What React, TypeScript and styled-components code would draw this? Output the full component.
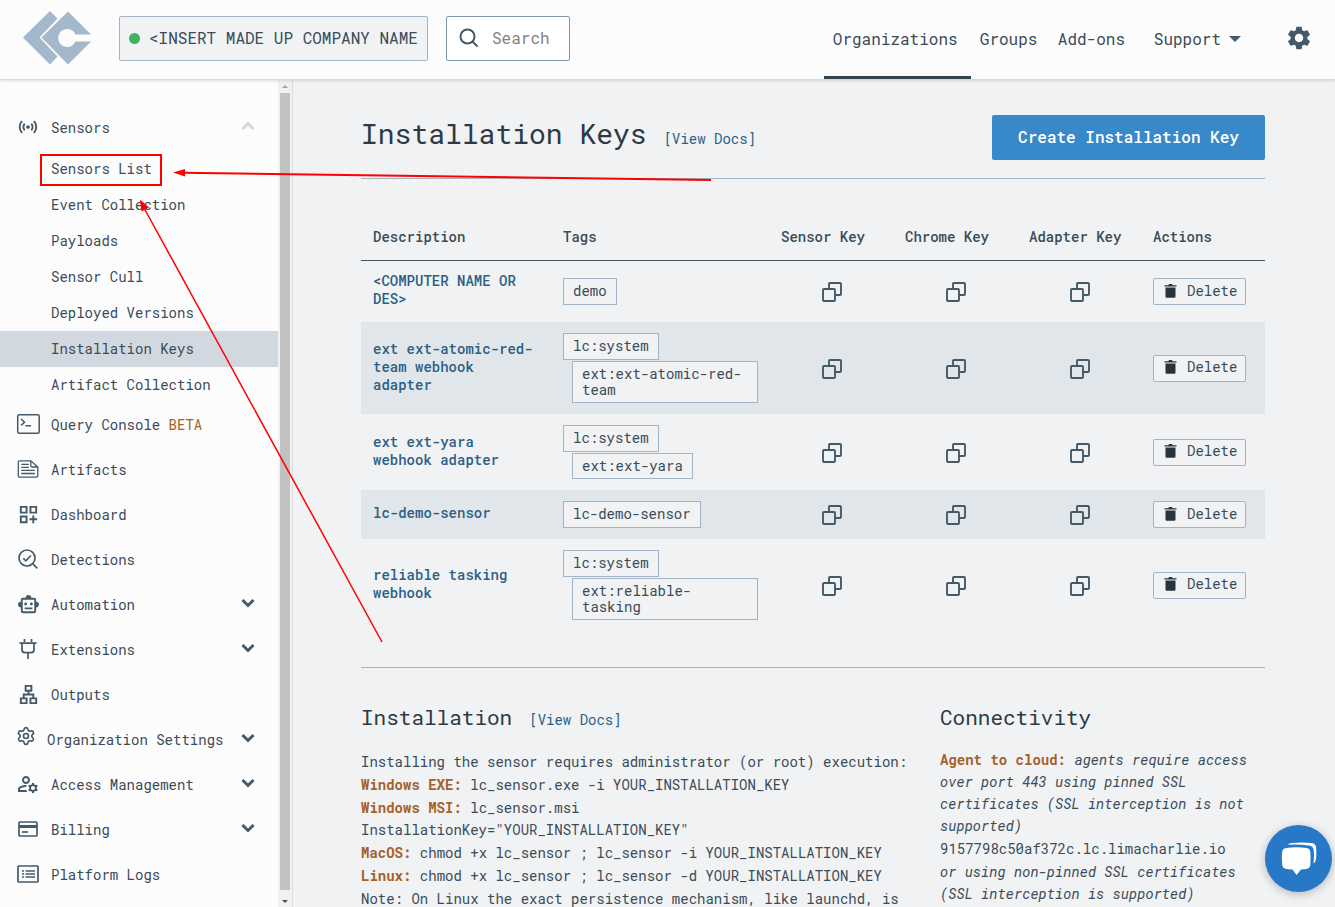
import React from "react";
import styled, { createGlobalStyle } from "styled-components";
import { Settings } from "lucide-react";
import {
  MdSensors,
  MdOutlineDashboardCustomize,
  MdOutlineSmartToy,
  MdOutlineLan,
  MdOutlineManageAccounts,
  MdSettings,
} from "react-icons/md";

const ink = "#3b4b58";
const slate = "#455a68";
const line = "#a3b5c5";
const paper = "#f0f2f4";
const rust = "#a5612a";
const link = "#2b5f86";
const mono = `"Roboto Mono", "DejaVu Sans Mono", "Liberation Mono", monospace`;

const GlobalStyle = createGlobalStyle`
  *, *::before, *::after { box-sizing: border-box; }
  body { margin: 0; background: ${paper}; color: ${ink}; font: 14px/18px ${mono}; }
  button, input { font: inherit; color: inherit; }
  h1, h2, p, ul { margin: 0; padding: 0; font-weight: 400; }
  ul { list-style: none; }
  a { color: inherit; text-decoration: none; }
`;

const Shell = styled.div`
  position: relative;
  display: flex;
  flex-direction: column;
  height: 100vh;
  overflow: hidden;
`;

const Header = styled.header`
  display: flex;
  align-items: center;
  flex: none;
  height: 80px;
  padding: 0 22px 3px 23px;
  background: #fcfcfc;
  border-bottom: 1px solid #d5d7d9;
  box-shadow: 0 1px 3px rgba(0, 0, 0, 0.12);
  z-index: 1;
`;

const Logo = styled.a`
  display: flex;
  margin-right: 28px;
`;

const OrgButton = styled.button`
  display: flex;
  align-items: center;
  gap: 9px;
  width: 309px;
  height: 45px;
  padding: 0 0 0 9px;
  overflow: hidden;
  background: ${paper};
  border: 1px solid ${line};
  border-radius: 2px;
  font-size: 16px;
  white-space: nowrap;
`;

const StatusDot = styled.span`
  flex: none;
  width: 11px;
  height: 11px;
  border-radius: 50%;
  background: #3db55f;
`;

const SearchBox = styled.label`
  display: flex;
  align-items: center;
  gap: 13px;
  width: 124px;
  height: 45px;
  margin-left: 18px;
  padding: 0 10px 0 12px;
  background: #fff;
  border: 1px solid #8097ab;
  border-radius: 2px;
`;

const SearchInput = styled.input`
  flex: 1;
  min-width: 0;
  padding: 0;
  border: 0;
  outline: 0;
  background: none;
  font-size: 16px;
  &::placeholder { color: #838383; opacity: 1; }
`;

const Nav = styled.nav`
  display: grid;
  grid-template-columns: 147px 78px 96px auto;
  align-self: stretch;
  margin: 0 44px -3px auto;
  font-size: 16px;
`;

const NavLink = styled.a<{ $active?: boolean }>`
  display: flex;
  align-items: center;
  padding: 2px 9px 0;
  border-bottom: 3px solid ${(p) => (p.$active ? "#34444f" : "transparent")};
`;

const SupportButton = styled.button`
  display: flex;
  align-items: center;
  gap: 8px;
  padding: 0 0 1px;
  margin-left: 9px;
  background: none;
  border: 0;
`;

const IconButton = styled.button`
  display: inline-flex;
  padding: 0;
  background: none;
  border: 0;
  color: ${slate};
  vertical-align: middle;
`;

const Body = styled.div`
  display: flex;
  flex: 1;
  min-height: 0;
`;

const Sidebar = styled.nav`
  flex: none;
  width: 278px;
  padding-top: 26px;
  background: #fcfcfc;
  overflow: hidden;
`;

const SideLink = styled.a`
  display: flex;
  align-items: center;
  height: 45px;
  padding: 0 23px 2px 16px;
  color: ${ink};
`;

const SideIcon = styled.span<{ $narrow?: boolean }>`
  display: flex;
  justify-content: center;
  flex: none;
  width: ${(p) => (p.$narrow ? 20 : 24)}px;
  margin-right: 11px;
  padding-bottom: ${(p) => (p.$narrow ? 7 : 1)}px;
  color: ${slate};
`;

const Chevron = styled.span<{ $faded?: boolean }>`
  display: flex;
  margin-left: auto;
  padding-bottom: 3px;
  color: ${(p) => (p.$faded ? "#d0d7de" : slate)};
`;

const SubLink = styled.a<{ $active?: boolean }>`
  display: flex;
  align-items: center;
  height: 36px;
  padding-left: 51px;
  background: ${(p) => (p.$active ? "#d1d8df" : "transparent")};
`;

const Beta = styled.span`
  margin-left: 1ch;
  color: ${rust};
`;

const ScrollTrack = styled.div`
  display: flex;
  flex-direction: column;
  flex: none;
  width: 15px;
  padding: 4px 3px 3px 2px;
  background: #f1f1f1;
  border-right: 1px solid #dcdee0;
  align-items: center;
  gap: 4px;
`;

const ScrollThumb = styled.div`
  flex: 1;
  width: 10px;
  background: #c1c1c1;
`;

const ScrollArrow = styled.span<{ $down?: boolean }>`
  width: 0;
  height: 0;
  margin: ${(p) => (p.$down ? "6px 0 1px" : "1px 0")};
  border-left: 3px solid transparent;
  border-right: 3px solid transparent;
  ${(p) => (p.$down ? "border-top: 3px solid #505050" : "border-bottom: 3px solid #a3a3a3")};
`;

const Main = styled.main`
  flex: 1;
  min-width: 0;
  padding: 35px 70px 0 68px;
  overflow: hidden;
`;

const TitleBar = styled.div`
  display: flex;
  justify-content: space-between;
  padding-bottom: 18px;
  border-bottom: 1px solid ${line};
`;

const TitleGroup = styled.div`
  display: flex;
  align-items: baseline;
  gap: 17px;
`;

const PageTitle = styled.h1`
  color: #2d3a43;
  font-size: 28px;
  line-height: 38px;
`;

const SectionTitle = styled.h2`
  color: #2d3a43;
  font-size: 21px;
  line-height: 28px;
`;

const DocsLink = styled.a`
  color: ${link};
`;

const PrimaryButton = styled.button`
  width: 273px;
  height: 45px;
  padding: 0 0 2px;
  background: #3889c9;
  border: 0;
  border-radius: 2px;
  color: #fff;
  font-size: 16px;
  font-weight: 500;
`;

const Table = styled.table`
  width: 100%;
  margin: 49px 0 36px;
  table-layout: fixed;
  border-collapse: separate;
  border-spacing: 0;
`;

const HeadCell = styled.th<{ $width?: number }>`
  width: ${(p) => (p.$width ? `${p.$width}px` : "auto")};
  padding: 0 0 14px 12px;
  border-bottom: 1px solid ${slate};
  font-weight: 500;
  text-align: left;
`;

const Row = styled.tr`
  &:nth-child(even) { background: #e1e6ea; }
`;

const Cell = styled.td<{ $center?: boolean }>`
  padding: ${(p) => (p.$center ? "1px 0 0 2px" : "11px 11px 11px 12px")};
  text-align: ${(p) => (p.$center ? "center" : "left")};
  vertical-align: middle;
`;

const NameCell = styled(Cell)`
  padding: 11px 12px 14px;
  color: ${link};
  font-weight: 500;
`;

const TagList = styled.ul`
  display: flex;
  flex-direction: column;
  align-items: flex-start;
`;

const Tag = styled.li`
  min-height: 27px;
  max-width: 187px;
  padding: 4px 9px;
  background: ${paper};
  border: 1px solid ${line};
  line-height: 16px;
  & + & {
    min-height: 26px;
    margin: 1px 0 0 9px;
  }
`;

const DeleteButton = styled.button`
  display: flex;
  align-items: center;
  gap: 10px;
  width: 93px;
  height: 27px;
  padding: 0 0 2px 10px;
  background: ${paper};
  border: 1px solid ${line};
  border-radius: 2px;
`;

const Details = styled.div`
  display: grid;
  grid-template-columns: minmax(0, 1fr) 325px;
  column-gap: 28px;
  padding-top: 35px;
  border-top: 1px solid ${line};
`;

const Prose = styled.div<{ $gap: number }>`
  display: flex;
  flex-direction: column;
  gap: 1px;
  margin-top: ${(p) => p.$gap}px;
  line-height: 22px;
`;

const Term = styled.strong`
  color: ${rust};
  font-weight: 700;
`;

const ChatButton = styled.button`
  position: absolute;
  right: 3px;
  bottom: 15px;
  display: flex;
  align-items: center;
  justify-content: center;
  width: 67px;
  height: 67px;
  padding: 0;
  border: 0;
  border-radius: 50%;
  background: #2878c8;
  box-shadow: 0 2px 10px rgba(0, 0, 0, 0.25);
  z-index: 2;
`;

const Annotations = styled.svg`
  position: absolute;
  top: 0;
  left: 0;
  z-index: 3;
  pointer-events: none;
`;

const LogoMark = () => (
  <svg width="68" height="54" viewBox="0 0 68 54" fill="#a3b8ca" aria-hidden="true">
    <path d="M27 0 34.500 7.500 16.500 26.500 34.500 45.500 27 53.500 0 26.500Z" />
    <path fillRule="evenodd" d="M45 .5 68 23.500H52.500A9 9 0 1 0 52.500 30.500H68L45 53.500 18.500 26.500Z" />
  </svg>
);

const SearchIcon = () => (
  <svg width="20" height="20" viewBox="0 0 20 20" fill="none" stroke={slate} strokeWidth="2" aria-hidden="true">
    <circle cx="8.500" cy="8.500" r="7" />
    <path d="m13.500 13.500 5 5" />
  </svg>
);

const ChevronIcon = ({ up }: { up?: boolean }) => (
  <svg width="14" height="10" viewBox="0 0 14 10" fill="none" stroke="currentColor" strokeWidth="3" aria-hidden="true">
    <path d={up ? "M1.500 8 7 2.500 12.500 8" : "M1.500 2 7 7.500 12.500 2"} />
  </svg>
);

const TerminalIcon = () => (
  <svg width="24" height="20" viewBox="0 0 24 20" fill="none" stroke="currentColor" strokeWidth="1.500">
    <rect x="1.700" y=".8" width="21.500" height="18.400" rx="1.500" />
    <path d="m5.200 5 3.300 3.200-3.300 3.200M9.500 11.700h5.500" />
  </svg>
);

const ArtifactIcon = () => (
  <svg width="22" height="18" viewBox="0 0 22 18" fill="none" stroke="currentColor" strokeWidth="1.300">
    <path d="M2.800.8h11L20.800 7v8.500q0 1.600-1.600 1.600H2.800Q1.300 17.100 1.300 15.600V2.300Q1.300 .8 2.800.8ZM13.800.8V5.500q0 1.500 1.500 1.500h5.500M4.300 4.300h7.500M4.300 7.300h7.500M4.300 10.300h13.500M4.300 13.500h13.500" />
  </svg>
);

const DetectIcon = () => (
  <svg width="20" height="20" viewBox="0 0 20 20" fill="none" stroke="currentColor" strokeWidth="1.700">
    <circle cx="9" cy="9" r="8" />
    <path d="m14.700 14.700 4.600 4.600M5.300 9.300l2.600 2.500 5-5.300" />
  </svg>
);

const PlugIcon = () => (
  <svg width="18" height="20" viewBox="0 0 18 20" fill="none" stroke="currentColor" strokeWidth="1.700">
    <path d="M5.500 0v3M12.500 0v3M.5 4.200h17M3 4.200v6.500q0 3 3 3h6q3 0 3-3V4.200M9 13.700V20" />
  </svg>
);

const CardIcon = () => (
  <svg width="20" height="16" viewBox="0 0 20 16" fill="none" stroke="currentColor" strokeWidth="1.700">
    <rect x="1" y="1" width="18" height="14" rx="1" />
    <path d="M1 5.500h18" strokeWidth="3" />
    <path d="M4 11h6" />
  </svg>
);

const LogsIcon = () => (
  <svg width="22" height="18" viewBox="0 0 22 18" fill="none" stroke="currentColor" strokeWidth="1.700">
    <rect x="1" y="1" width="20" height="16" rx=".8" />
    <path d="M5 6h2M5 9h2M5 12h2M8.500 6H18M8.500 9H18M8.500 12H18" strokeWidth="1.300" />
  </svg>
);

const CopyIcon = () => (
  <svg width="20" height="20" viewBox="0 0 20 20" fill="none" stroke="currentColor" strokeWidth="1.900" aria-hidden="true">
    <rect x="1" y="7" width="12" height="12" rx="1" />
    <path d="M7 7V2q0-1 1-1h10q1 0 1 1v10q0 1-1 1h-5" />
  </svg>
);

const TrashIcon = () => (
  <svg width="13" height="14" viewBox="0 0 13 14" fill="#28343d" aria-hidden="true">
    <path d="M.5 1.200h3.700L5.200 0h2.600l1 1.200h3.700v1.300H.5ZM1.500 3.500h10V12.500q0 1.200-1.200 1.200H2.700q-1.200 0-1.200-1.200Z" />
  </svg>
);

const sensorLinks = [
  "Sensors List",
  "Event Collection",
  "Payloads",
  "Sensor Cull",
  "Deployed Versions",
  "Installation Keys",
  "Artifact Collection",
];

type SideItem = { label: string; icon: React.ReactNode; beta?: boolean; expands?: boolean; narrow?: boolean };

const sideItems: SideItem[] = [
  { label: "Query Console", icon: <TerminalIcon />, beta: true },
  { label: "Artifacts", icon: <ArtifactIcon /> },
  { label: "Dashboard", icon: <MdOutlineDashboardCustomize size={23} /> },
  { label: "Detections", icon: <DetectIcon /> },
  { label: "Automation", icon: <MdOutlineSmartToy size={23} />, expands: true },
  { label: "Extensions", icon: <PlugIcon />, expands: true },
  { label: "Outputs", icon: <MdOutlineLan size={23} /> },
  { label: "Organization Settings", icon: <Settings size={20} strokeWidth={2} />, expands: true, narrow: true },
  { label: "Access Management", icon: <MdOutlineManageAccounts size={24} />, expands: true },
  { label: "Billing", icon: <CardIcon />, expands: true },
  { label: "Platform Logs", icon: <LogsIcon /> },
];

const keys = [
  { name: "<COMPUTER NAME OR DES>", tags: ["demo"] },
  { name: "ext ext-atomic-red-team webhook adapter", tags: ["lc:system", "ext:ext-atomic-red-team"] },
  { name: "ext ext-yara webhook adapter", tags: ["lc:system", "ext:ext-yara"] },
  { name: "lc-demo-sensor", tags: ["lc-demo-sensor"] },
  { name: "reliable tasking webhook", tags: ["lc:system", "ext:reliable-tasking"] },
];

const keyKinds = ["Sensor Key", "Chrome Key", "Adapter Key"];

export default function App() {
  return (
    <>
      <GlobalStyle />
      <Shell>
        <Header>
          <Logo href="#" aria-label="Home"><LogoMark /></Logo>
          <OrgButton type="button">
            <StatusDot />
            <span>{"<INSERT MADE UP COMPANY NAME HERE>"}</span>
          </OrgButton>
          <SearchBox>
            <SearchIcon />
            <SearchInput type="text" placeholder="Search" aria-label="Search" />
          </SearchBox>
          <Nav>
            <NavLink href="#" $active>Organizations</NavLink>
            <NavLink href="#">Groups</NavLink>
            <NavLink href="#">Add-ons</NavLink>
            <SupportButton type="button">
              Support
              <svg width="12" height="6" viewBox="0 0 12 6" fill={slate} aria-hidden="true"><path d="M0 0h12L6 6Z" /></svg>
            </SupportButton>
          </Nav>
          <IconButton type="button" aria-label="Settings"><MdSettings size={28} /></IconButton>
        </Header>

        <Body>
          <Sidebar>
            <SideLink href="#">
              <SideIcon><MdSensors size={22} /></SideIcon>
              Sensors
              <Chevron $faded><ChevronIcon up /></Chevron>
            </SideLink>
            {sensorLinks.map((label) => (
              <SubLink key={label} href="#" $active={label === "Installation Keys"}>{label}</SubLink>
            ))}
            {sideItems.map((item) => (
              <SideLink key={item.label} href="#">
                <SideIcon $narrow={item.narrow}>{item.icon}</SideIcon>
                {item.label}
                {item.beta && <Beta>BETA</Beta>}
                {item.expands && <Chevron><ChevronIcon /></Chevron>}
              </SideLink>
            ))}
          </Sidebar>
          <ScrollTrack>
            <ScrollArrow />
            <ScrollThumb />
            <ScrollArrow $down />
          </ScrollTrack>

          <Main>
            <TitleBar>
              <TitleGroup>
                <PageTitle>Installation Keys</PageTitle>
                <DocsLink href="#">[View Docs]</DocsLink>
              </TitleGroup>
              <PrimaryButton type="button">Create Installation Key</PrimaryButton>
            </TitleBar>

            <Table>
              <thead>
                <tr>
                  <HeadCell $width={190}>Description</HeadCell>
                  <HeadCell>Tags</HeadCell>
                  {keyKinds.map((kind) => <HeadCell key={kind} $width={124}>{kind}</HeadCell>)}
                  <HeadCell $width={124}>Actions</HeadCell>
                </tr>
              </thead>
              <tbody>
                {keys.map((item) => (
                  <Row key={item.name}>
                    <NameCell>{item.name}</NameCell>
                    <Cell>
                      <TagList>{item.tags.map((tag) => <Tag key={tag}>{tag}</Tag>)}</TagList>
                    </Cell>
                    {keyKinds.map((kind) => (
                      <Cell key={kind} $center>
                        <IconButton type="button" aria-label={`Copy ${kind}`}><CopyIcon /></IconButton>
                      </Cell>
                    ))}
                    <Cell>
                      <DeleteButton type="button"><TrashIcon />Delete</DeleteButton>
                    </Cell>
                  </Row>
                ))}
              </tbody>
            </Table>

            <Details>
              <section>
                <TitleGroup>
                  <SectionTitle>Installation</SectionTitle>
                  <DocsLink href="#">[View Docs]</DocsLink>
                </TitleGroup>
                <Prose $gap={20}>
                  <p>Installing the sensor requires administrator (or root) execution:</p>
                  <p><Term>Windows EXE:</Term> lc_sensor.exe -i YOUR_INSTALLATION_KEY</p>
                  <p><Term>Windows MSI:</Term> lc_sensor.msi<br />InstallationKey="YOUR_INSTALLATION_KEY"</p>
                  <p><Term>MacOS:</Term> chmod +x lc_sensor ; lc_sensor -i YOUR_INSTALLATION_KEY</p>
                  <p><Term>Linux:</Term> chmod +x lc_sensor ; lc_sensor -d YOUR_INSTALLATION_KEY</p>
                  <p>Note: On Linux the exact persistence mechanism, like launchd, is</p>
                </Prose>
              </section>
              <section>
                <SectionTitle>Connectivity</SectionTitle>
                <Prose $gap={18}>
                  <p><Term>Agent to cloud:</Term> <em>agents require access over port 443 using pinned SSL certificates (SSL interception is not supported)</em></p>
                  <p>9157798c50af372c.lc.limacharlie.io</p>
                  <p><em>or using non-pinned SSL certificates (SSL interception is supported)</em></p>
                </Prose>
              </section>
            </Details>
          </Main>
        </Body>

        <ChatButton type="button" aria-label="Open chat">
          <svg width="36" height="34" viewBox="0 0 36 34" fill="#fff" aria-hidden="true">
            <path d="M5 6Q15 4.500 26 6q3 .5 3.300 4 .7 6 0 13-.3 3-3.300 3.700-2 .5-6 .8L15.500 33 11.500 27.500Q7 27.200 4.500 26.700 1.500 26 1.200 23q-.9-7 0-13Q1.500 6.500 5 6Z" />
            <path d="M7 2.800Q8 1.300 11 1 20-.2 31 1q3.500.5 4 4 .7 5 0 12-.3 3-2.500 4.500.8-7 .2-13-.4-4.500-4.700-5Q17 2 7 2.800Z" />
          </svg>
        </ChatButton>

        <Annotations width="720" height="650" viewBox="0 0 720 650" fill="none" stroke="#fe0000" aria-hidden="true">
          <rect x="41" y="155" width="120" height="30" strokeWidth="2" />
          <path d="M711 180 182 172.700" strokeWidth="2" />
          <path d="M382 642 144 208" strokeWidth="1.500" />
          <path d="M173 172.500 185 169v7.500ZM140 199.500 149 207.500 141.500 211.500Z" fill="#fe0000" stroke="none" />
        </Annotations>
      </Shell>
    </>
  );
}
